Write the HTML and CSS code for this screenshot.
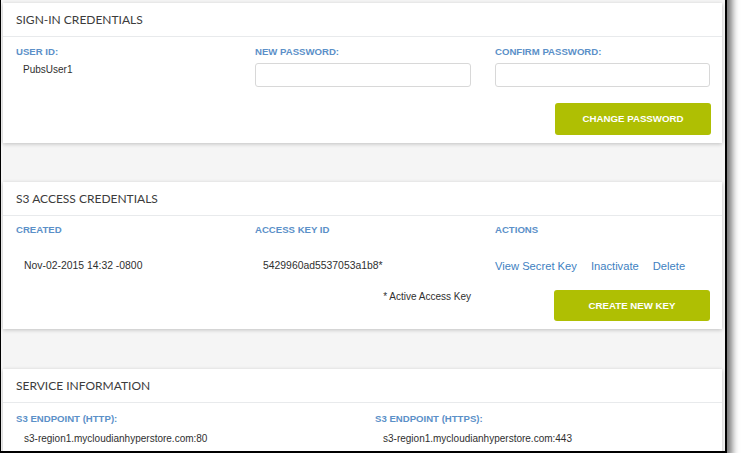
FILE: index.html
```html
<!DOCTYPE html>
<html>
<head>
<meta charset="utf-8">
<link rel="stylesheet" href="styles.css">
</head>
<body>
<div class="frame">
  <section class="card">
    <div class="card-head">SIGN-IN CREDENTIALS</div>
    <div class="card-body">
      <div class="grid3">
        <div class="col">
          <div class="label">USER ID:</div>
          <div class="value">PubsUser1</div>
        </div>
        <div class="col">
          <div class="label">NEW PASSWORD:</div>
          <div class="input"></div>
        </div>
        <div class="col">
          <div class="label">CONFIRM PASSWORD:</div>
          <div class="input"></div>
        </div>
      </div>
      <div class="btn-row">
        <div class="btn">CHANGE PASSWORD</div>
      </div>
    </div>
  </section>

  <section class="card card-2">
    <div class="card-head">S3 ACCESS CREDENTIALS</div>
    <div class="card-body">
      <div class="grid3">
        <div class="label">CREATED</div>
        <div class="label">ACCESS KEY ID</div>
        <div class="label">ACTIONS</div>
      </div>
      <div class="grid3 data-row">
        <div class="value">Nov-02-2015 14:32 -0800</div>
        <div class="value">5429960ad5537053a1b8*</div>
        <div class="links"><span class="link">View Secret Key</span><span class="link">Inactivate</span><span class="link">Delete</span></div>
      </div>
      <div class="grid3 foot-row">
        <div></div>
        <div class="note">* Active Access Key</div>
        <div class="btn-cell"><div class="btn btn-2">CREATE NEW KEY</div></div>
      </div>
    </div>
  </section>

  <section class="card card-3">
    <div class="card-head">SERVICE INFORMATION</div>
    <div class="card-body">
      <div class="grid2">
        <div class="col">
          <div class="label">S3 ENDPOINT (HTTP):</div>
          <div class="value value-sm">s3-region1.mycloudianhyperstore.com:80</div>
        </div>
        <div class="col">
          <div class="label">S3 ENDPOINT (HTTPS):</div>
          <div class="value value-sm">s3-region1.mycloudianhyperstore.com:443</div>
        </div>
      </div>
    </div>
  </section>
</div>
</body>
</html>
```

FILE: styles.css
```css
html, body {
  margin: 0;
  padding: 0;
  background: #ffffff;
  overflow: hidden;
}

body {
  font-family: "Liberation Sans", Arial, sans-serif;
  color: #333333;
}

.frame {
  box-sizing: content-box;
  width: 724px;
  height: 448px;
  margin-top: -20px;
  padding-top: 23px;
  background: #f5f5f5;
  border-left: 1px solid #000;
  border-right: 2px solid #000;
  border-bottom: 2px solid #000;
  box-shadow: 5px 5px 7px rgba(0, 0, 0, 0.55);
  overflow: hidden;
  display: flex;
  flex-direction: column;
}

.card {
  margin: 0 3px 0 2px;
  background: #ffffff;
  box-shadow: 0 1px 4px rgba(0, 0, 0, 0.22);
  flex: none;
}

.card-2 {
  margin-top: 39px;
}

.card-3 {
  margin-top: 40px;
}

.card-head {
  height: 33px;
  line-height: 33px;
  padding-left: 13px;
  border-bottom: 1px solid #e8eaec;
  font-family: "Lato", "Liberation Sans", sans-serif;
  font-size: 12px;
  color: #3c3c3c;
}

.card-body {
  padding: 9px 11px 8px 13px;
}

.card-2 .card-body {
  padding-top: 8px;
}

.card-3 .card-body {
  padding-top: 10px;
}

.grid3 {
  display: grid;
  grid-template-columns: 216px 216px 216px;
  column-gap: 23px;
}

.grid3 > :nth-child(3) {
  margin-left: 1px;
}

.grid2 {
  display: grid;
  grid-template-columns: 359px 330px;
}

.label {
  font-size: 9.6px;
  font-weight: bold;
  line-height: 12px;
  color: #5b90c8;
}

.value {
  font-size: 10px;
  line-height: 14px;
  color: #2f2f2f;
  padding-left: 7px;
}

.grid3 .col > .value {
  margin-top: 5px;
}

.input {
  margin-top: 5px;
  height: 22px;
  border: 1px solid #d8d8d8;
  border-radius: 3px;
  background: #fff;
}

.btn-row {
  display: flex;
  justify-content: flex-end;
  margin-top: 16px;
}

.btn {
  width: 156px;
  height: 32px;
  line-height: 32px;
  background: #afbf03;
  border-radius: 3px;
  color: #ffffff;
  font-size: 9.7px;
  font-weight: bold;
  text-align: center;
}

.btn-2 {
  height: 31px;
  line-height: 31px;
}

.data-row {
  margin-top: 23px;
}

.data-row .value {
  padding-left: 8px;
  font-size: 10.4px;
}

.links {
  font-size: 11.2px;
  line-height: 14px;
  display: flex;
  gap: 14px;
}

.link {
  color: #3e7fc1;
}

.foot-row {
  margin-top: 17px;
}

.note {
  font-size: 10px;
  line-height: 14px;
  text-align: right;
  color: #2f2f2f;
}

.btn-cell {
  display: flex;
  justify-content: flex-end;
}

.value-sm {
  margin-top: 7px;
  padding-left: 8px;
}
```
